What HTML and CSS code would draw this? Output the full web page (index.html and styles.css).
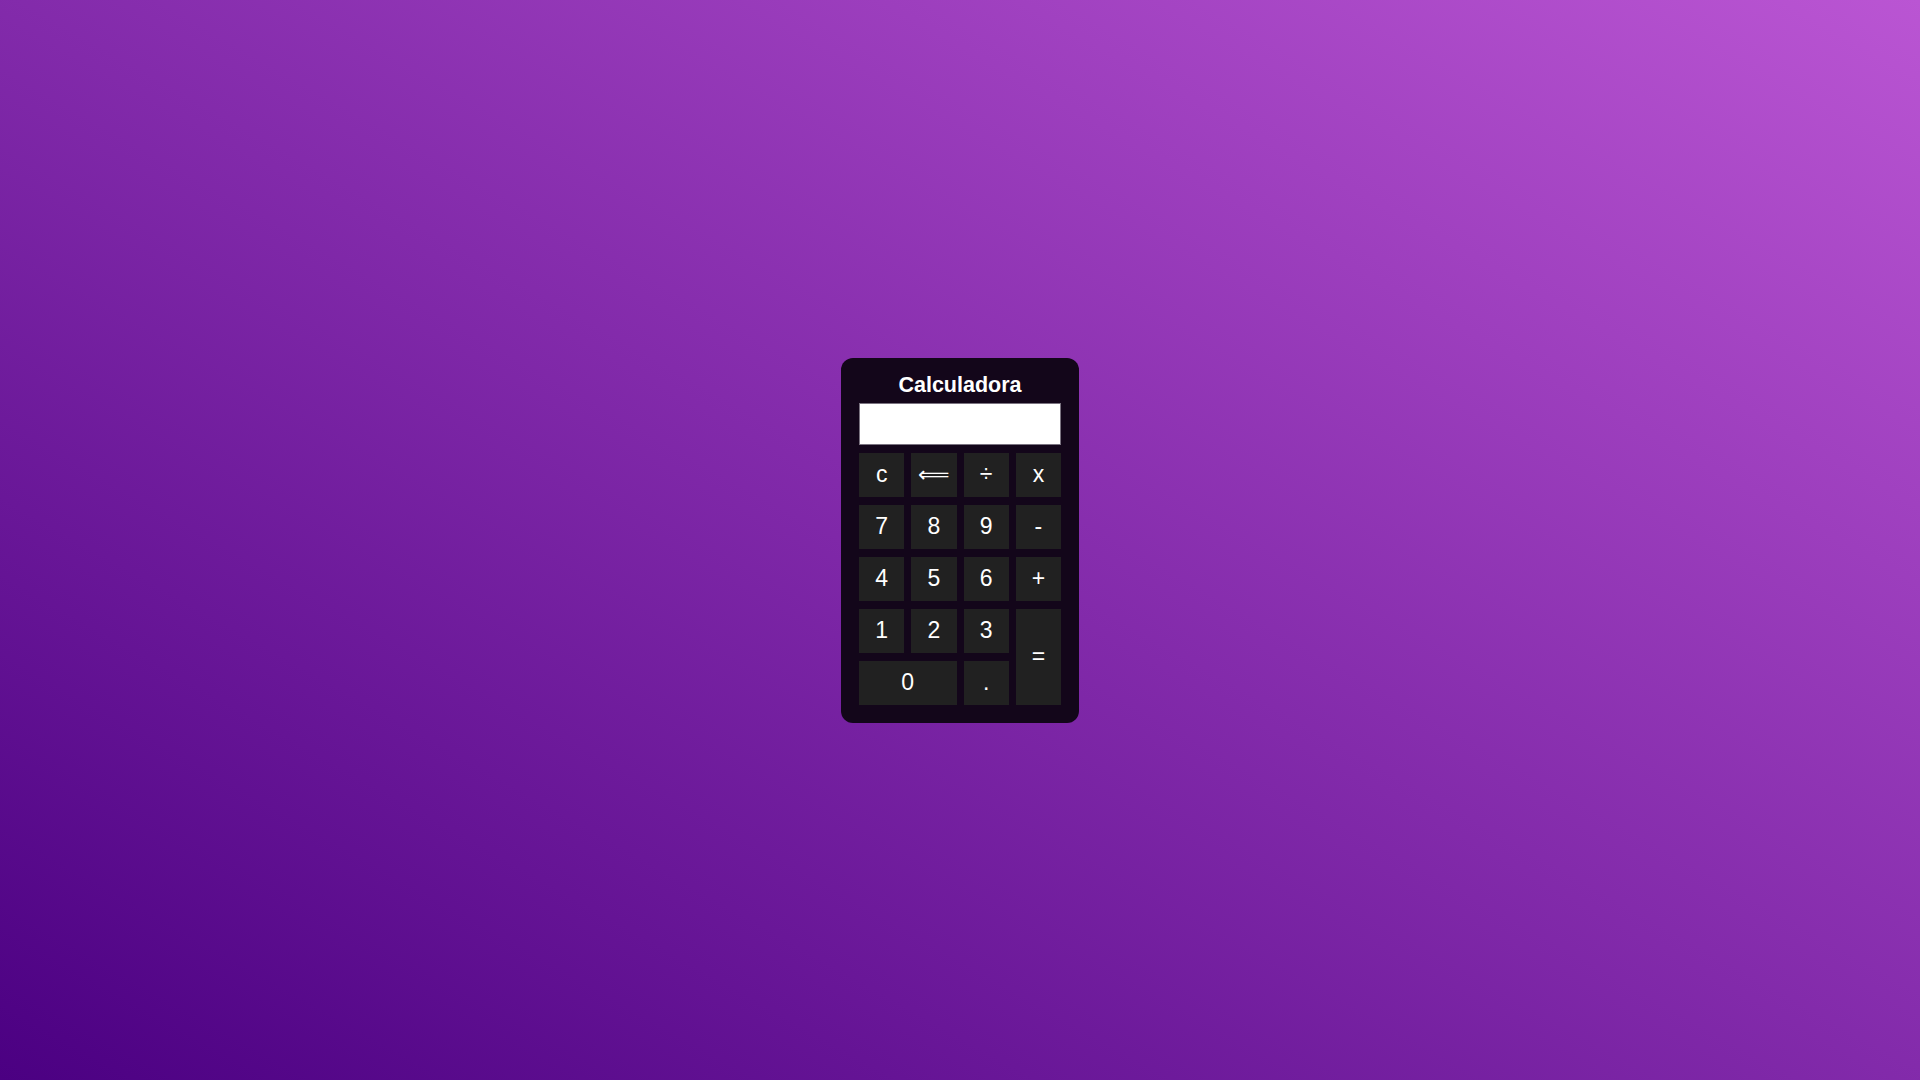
FILE: index.html
```html
<!DOCTYPE html>
<html lang="pt">
<head>
<meta charset="utf-8">
<title>Calculadora</title>
<link rel="stylesheet" href="styles.css">
</head>
<body>
<div class="calc">
  <h2 class="title">Calculadora</h2>
  <input class="display" type="text" readonly>
  <div class="keys">
    <button class="key">c</button>
    <button class="key arrow">⟸</button>
    <button class="key">÷</button>
    <button class="key">x</button>
    <button class="key">7</button>
    <button class="key">8</button>
    <button class="key">9</button>
    <button class="key">-</button>
    <button class="key">4</button>
    <button class="key">5</button>
    <button class="key">6</button>
    <button class="key">+</button>
    <button class="key">1</button>
    <button class="key">2</button>
    <button class="key">3</button>
    <button class="key equals">=</button>
    <button class="key zero">0</button>
    <button class="key">.</button>
  </div>
</div>
</body>
</html>
```
FILE: styles.css
```css
html, body {
  margin: 0;
  height: 100%;
}
body {
  background: linear-gradient(to top right, #4b0082, #ba55d3);
  display: flex;
  align-items: center;
  justify-content: center;
  font-family: "Liberation Sans", Arial, sans-serif;
}
.calc {
  width: 202px;
  padding: 15px 18px 18px;
  background: #13061a;
  border-radius: 12px;
  display: flex;
  flex-direction: column;
}
.title {
  margin: 0 0 5px;
  font-size: 21.5px;
  font-weight: bold;
  color: #ffffff;
  text-align: center;
  line-height: 25px;
}
.display {
  box-sizing: border-box;
  width: 100%;
  height: 42px;
  margin: 0 0 8px;
  border: 1px solid #7a7380;
  background: #ffffff;
  padding: 0 6px;
  font-size: 20px;
  font-family: inherit;
  outline: none;
}
.keys {
  display: grid;
  grid-template-columns: repeat(4, 1fr);
  grid-auto-rows: 44px;
  column-gap: 7px;
  row-gap: 8px;
}
.key {
  border: none;
  background: #212121;
  color: #ffffff;
  font-family: "Liberation Sans", Arial, "DejaVu Sans", sans-serif;
  font-size: 23px;
  padding: 0;
  margin: 0;
}
.arrow {
  font-family: "DejaVu Sans", sans-serif;
  font-size: 22px;
}
.equals {
  grid-column: 4;
  grid-row: 4 / span 2;
}
.zero {
  grid-column: 1 / span 2;
}
```
